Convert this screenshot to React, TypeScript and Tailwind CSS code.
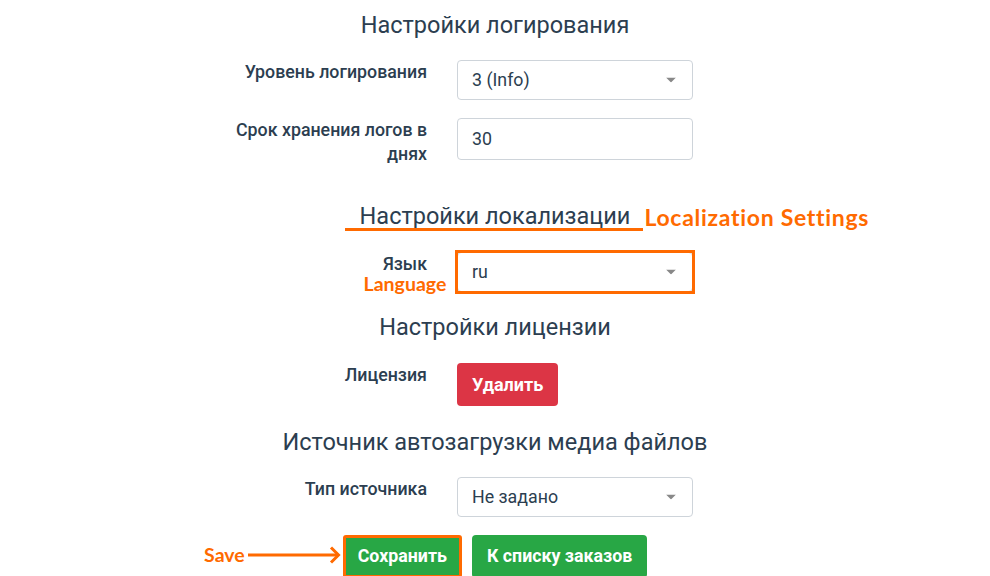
import React from 'react';

const ink = 'text-[#2c3e50]';
const note = { fontFamily: 'Lato, "Open Sans", sans-serif' };

function Caret(): React.ReactElement {
  return (
    <svg width="10" height="5" viewBox="0 0 10 5" className="absolute right-[16px] top-1/2 -translate-y-1/2">
      <path d="M0 0 L10 0 L5 5 Z" fill="#888" />
    </svg>
  );
}

function FakeSelect({ value, outlined = false }: { value: string; outlined?: boolean }): React.ReactElement {
  return (
    <div
      className={`relative w-[236px] h-[40px] bg-white border border-[#ced4da] rounded-[4px] flex items-center pl-[14px] text-[17.8px] ${ink}`}
    >
      {value}
      <Caret />
      {outlined && <div className="absolute -inset-[3px] border-[3px] border-[#ff6a00]" />}
    </div>
  );
}

function Heading({ children, className = '' }: { children: React.ReactNode; className?: string }): React.ReactElement {
  return (
    <div className={`flex justify-center ${className}`}>
      <h4 className={`text-[23.5px] leading-[26px] font-normal ${ink}`}>{children}</h4>
    </div>
  );
}

function Row({ label, children, className = '' }: { label: React.ReactNode; children: React.ReactNode; className?: string }): React.ReactElement {
  return (
    <div className={`flex ml-[233px] gap-[30px] ${className}`}>
      <div className={`w-[194px] text-right text-[17.8px] leading-[24px] font-medium ${ink}`}>{label}</div>
      <div>{children}</div>
    </div>
  );
}

export default function App(): React.ReactElement {
  return (
    <div className="w-[990px] h-[576px] bg-white overflow-hidden pt-[12px]" style={{ fontFamily: 'Roboto, "Liberation Sans", sans-serif' }}>
      {/* Logging */}
      <Heading>Настройки логирования</Heading>

      <Row label="Уровень логирования" className="mt-[22px]">
        <FakeSelect value="3 (Info)" />
      </Row>

      <Row label="Срок хранения логов в днях" className="mt-[18px]">
        <div className={`w-[236px] h-[42px] bg-white border border-[#ced4da] rounded-[4px] flex items-center pl-[14px] text-[17.8px] ${ink}`}>
          30
        </div>
      </Row>

      {/* Localization */}
      <div className="flex justify-center mt-[37px]">
        <div className="relative">
          <h4 className={`text-[23.5px] leading-[26px] font-normal ${ink}`}>Настройки локализации</h4>
          <div className="absolute left-[-15px] right-[-13px] top-[25px] h-[3px] bg-[#ff6a00]" />
          <span
            className="absolute left-full ml-[14px] top-[-3px] whitespace-nowrap text-[23px] tracking-[0.7px] font-bold text-[#ff6a00]"
            style={note}
          >
            Localization Settings
          </span>
        </div>
      </div>

      <Row
        className="mt-[23px]"
        label={
          <span className="relative inline-block leading-[20px] mt-[2px]">
            Язык
            <span
              className="absolute left-1/2 -translate-x-1/2 top-[20px] leading-[19px] whitespace-nowrap text-[19.5px] font-bold text-[#ff6a00]"
              style={note}
            >
              Language
            </span>
          </span>
        }
      >
        <FakeSelect value="ru" outlined />
      </Row>

      {/* License */}
      <Heading className="mt-[22px]">Настройки лицензии</Heading>

      <Row label="Лицензия" className="mt-[23px]">
        <button className="h-[43px] px-[15px] rounded-[4px] bg-[#dc3545] text-white text-[18px] font-bold">
          Удалить
        </button>
      </Row>

      {/* Media source */}
      <Heading className="mt-[23px]">Источник автозагрузки медиа файлов</Heading>

      <Row label="Тип источника" className="mt-[22px]">
        <FakeSelect value="Не задано" />
      </Row>

      {/* Actions */}
      <div className="flex justify-center gap-[10px] mt-[18px]">
        <div className="relative">
          <div className="absolute right-full mr-[2px] top-[6px] flex items-center gap-[3px]" style={note}>
            <span className="text-[19.5px] font-bold text-[#ff6a00] leading-[28px]">Save</span>
            <svg width="93" height="18" viewBox="0 0 93 18">
              <path d="M0 9 H90" stroke="#ff6a00" strokeWidth="3" />
              <path d="M83 1.5 L90.5 9 L83 16.5" stroke="#ff6a00" strokeWidth="3" fill="none" />
            </svg>
          </div>
          <button className="h-[43px] px-[12px] rounded-[3px] bg-[#28a745] border-[3px] border-[#ff6a00] text-white text-[17.8px] font-bold">
            Сохранить
          </button>
        </div>
        <button className="h-[43px] px-[15px] rounded-[4px] bg-[#28a745] text-white text-[17.8px] font-bold">
          К списку заказов
        </button>
      </div>
    </div>
  );
}
